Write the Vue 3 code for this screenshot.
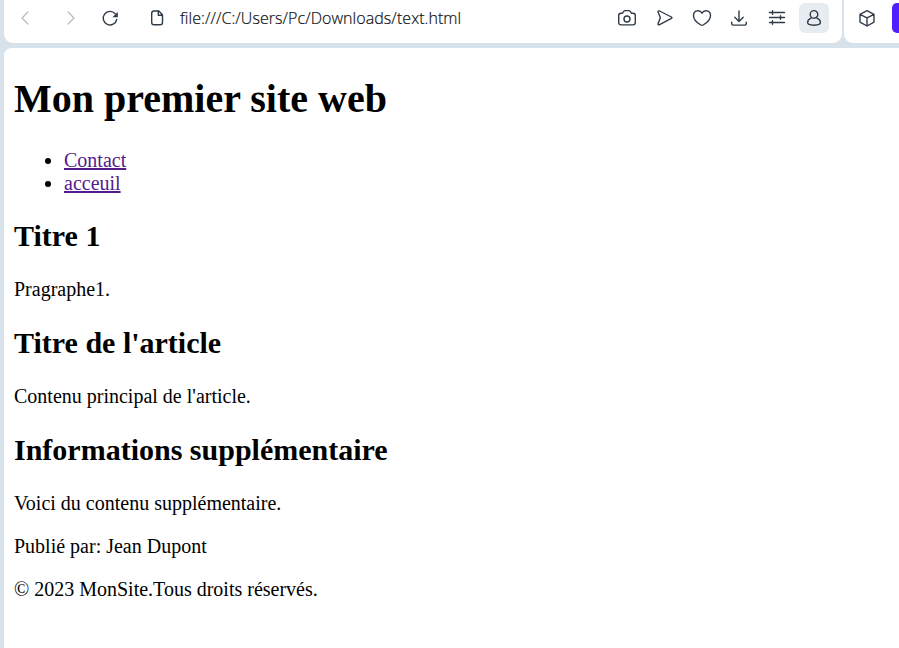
<script setup>
const navIcons = [
  { name: 'back', muted: true, d: 'M18 9l-6 6 6 6' },
  { name: 'forward', muted: true, d: 'M12 9l6 6-6 6' },
  { name: 'reload', d: 'M20.2 10.8A6.8 6.8 0 1 0 21.7 16.5', fill: 'M22.8 9v5.2h-5.4z' },
  { name: 'document', d: 'M12 8h4.8l3.7 3.8v7.7a2.3 2.3 0 0 1-2.3 2.3h-6.2a2.3 2.3 0 0 1-2.3-2.3v-9.2A2.3 2.3 0 0 1 12 8zM16.3 8.2v4h4' }
]

const actions = [
  { name: 'snapshot', d: 'M9 10.2h1.6l1-1.7q.5-.9 1.5-.9h3.8q1 0 1.5.9l1 1.7H21q2.3 0 2.3 2.3v7.1q0 2.3-2.3 2.3H9q-2.3 0-2.3-2.3v-7.1q0-2.3 2.3-2.3zM18 16a3 3 0 1 1-6 0a3 3 0 0 1 6 0z' },
  { name: 'send', d: 'M9.6 8l11.8 6q1 .7 0 1.4L9.6 21.6q-2 .7-1.5-1.2l2.3-5.6-2.3-5.5Q7.8 7.4 9.6 8z' },
  { name: 'favorite', d: 'M15 10.2C13.2 6.7 6.5 6.6 6.5 12.7c0 4 3.7 7.2 7.3 9.3q1.2.7 2.4 0c3.6-2.1 7.3-5.3 7.3-9.3 0-6.1-6.7-6-8.5-2.5z' },
  { name: 'download', d: 'M15 8v10.2M10.8 14.2l4.2 4.2 4.2-4.2M7.7 19.2v1.4q0 1.5 1.5 1.5h11.6q1.5 0 1.5-1.5v-1.4' },
  { name: 'settings', d: 'M7.5 9.5h15M7.5 14.5h15M7.5 19.5h15M10.5 7.7v3.6M18.5 12.7v3.6M10.5 17.7v3.6' },
  { name: 'profile', active: true, d: 'M18.8 11.4a3.8 3.8 0 1 1-7.6 0a3.8 3.8 0 0 1 7.6 0zM12 15.2c-2.2 1-3.4 2.7-3.4 4.4q0 2.6 6.4 2.6t6.4-2.6c0-1.7-1.2-3.4-3.4-4.4' }
]
</script>

<template>
  <div class="browser">
    <header class="chrome">
      <div class="toolbar">
        <nav class="nav">
          <span v-for="icon in navIcons" :key="icon.name" class="tool" :class="{ muted: icon.muted }">
            <svg viewBox="0 0 30 30"><path :d="icon.d" /><path v-if="icon.fill" class="solid" :d="icon.fill" /></svg>
          </span>
        </nav>
        <span class="address">file:///C:/Users/Pc/Downloads/text.html</span>
        <div class="actions">
          <span v-for="icon in actions" :key="icon.name" class="tool" :class="{ active: icon.active }">
            <svg viewBox="0 0 30 30"><path :d="icon.d" /></svg>
          </span>
        </div>
      </div>
      <div class="extension">
        <span class="tool">
          <svg viewBox="0 0 30 30"><path d="M15 7.7l7 3.6v7.8l-7 3.9-7-3.9v-7.8zM8 11.3l7 3.6 7-3.6M15 14.9V23" /></svg>
        </span>
        <span class="badge"></span>
      </div>
    </header>
    <main class="page">
      <h1>Mon premier site web</h1>
      <ul>
        <li><a href="#">Contact</a></li>
        <li><a href="#">acceuil</a></li>
      </ul>
      <h2>Titre 1</h2>
      <p>Pragraphe1.</p>
      <h2>Titre de l'article</h2>
      <p>Contenu principal de l'article.</p>
      <h2>Informations supplémentaire</h2>
      <p>Voici du contenu supplémentaire.</p>
      <p>Publié par: Jean Dupont</p>
      <p>© 2023 MonSite.Tous droits réservés.</p>
    </main>
  </div>
</template>

<style>
body {
  margin: 0;
  overflow: hidden;
}
</style>

<style scoped>
.browser {
  display: flex;
  flex-direction: column;
  gap: 5px;
  box-sizing: border-box;
  height: 648px;
  padding-left: 4px;
  background: #d8e2ea;
  overflow: hidden;
}
.chrome {
  display: flex;
  gap: 2px;
  height: 43px;
  flex: none;
}
.toolbar {
  display: flex;
  box-sizing: border-box;
  width: 838px;
  padding: 3px 13px 0 6px;
  background: #fff;
  border-radius: 0 0 9px 9px;
}
.nav {
  display: grid;
  grid-template-columns: 46px 39px 47px 38px;
}
.tool {
  display: block;
  width: 30px;
  height: 30px;
  border-radius: 6px;
  color: #303b48;
}
.muted {
  color: #b9bdc2;
}
.active {
  background: #e7ecf1;
}
svg {
  display: block;
  width: 30px;
  height: 30px;
  fill: none;
  stroke: currentColor;
  stroke-width: 1.4;
  stroke-linecap: round;
  stroke-linejoin: round;
}
.solid {
  fill: currentColor;
  stroke: none;
}
.address {
  font: 300 16px/30px "Open Sans", sans-serif;
  letter-spacing: 0.06px;
  color: #101016;
  -webkit-text-stroke: 0.2px #101016;
  white-space: nowrap;
}
.actions {
  display: grid;
  grid-template-columns: 38px 37px 37px 38px 37px 30px;
  margin-left: auto;
}
.extension {
  display: flex;
  flex: 1;
  justify-content: space-between;
  box-sizing: border-box;
  padding: 3px 0 0 8px;
  background: #fff;
  border-radius: 0 0 0 9px;
}
.badge {
  width: 7px;
  height: 30px;
  border-radius: 5px 0 0 5px;
  background: #501fff;
}
.page {
  display: flow-root;
  flex: 1;
  padding: 0 10px;
  background: #fff;
  border-top-left-radius: 8px;
  font: 20px/23px "Liberation Serif", "Times New Roman", serif;
  color: #000;
}
h1 {
  margin: 28px 0 27px;
  font-size: 40px;
  line-height: 46px;
}
h2 {
  margin: 24px 0 25px;
  font-size: 30px;
  line-height: 34px;
}
p {
  margin: 20px 0;
}
p + h2 {
  margin-top: 25px;
}
ul {
  margin: 0;
  padding-left: 50px;
}
a {
  color: #551a8b;
}
</style>
